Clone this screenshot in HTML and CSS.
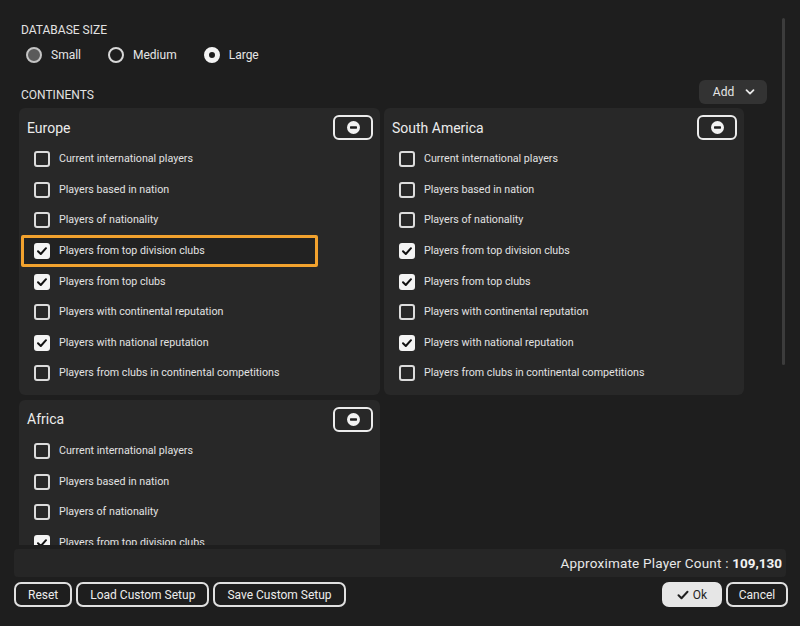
FILE: index.html
```html
<!DOCTYPE html>
<html lang="en">
<head>
    <meta charset="UTF-8">
    <title>Database Setup</title>
    <link rel="stylesheet" href="styles.css">
</head>
<body>
    <div class="dialog">
        <div class="scroll-area">
            <div class="section-label">DATABASE SIZE</div>
            <div class="radio-group">
                <label class="radio"><span class="radio-dot dim"></span>Small</label>
                <label class="radio"><span class="radio-dot"></span>Medium</label>
                <label class="radio"><span class="radio-dot selected"></span>Large</label>
            </div>

            <div class="continents">
                <div class="continents-header">
                    <div class="section-label">CONTINENTS</div>
                    <button class="add-button">Add
                        <svg width="10" height="10" viewBox="0 0 10 10"><path d="M1.5 3.2 5 6.6 8.5 3.2" fill="none" stroke="#e8e8e8" stroke-width="1.8" stroke-linecap="round" stroke-linejoin="round"/></svg>
                    </button>
                </div>
                <div class="card-grid" id="cardGrid">
                    <!-- cards rendered below -->
                </div>
            </div>

            <div class="scrollbar"></div>
        </div>

        <div class="count-bar">Approximate Player Count :&nbsp;<b>109,130</b></div>

        <div class="button-row">
            <button class="btn">Reset</button>
            <button class="btn">Load Custom Setup</button>
            <button class="btn">Save Custom Setup</button>
            <span class="spacer"></span>
            <button class="btn btn-ok">
                <svg width="12" height="12" viewBox="0 0 12 12"><path d="M1.5 6.3 4.5 9.2 10.5 2.8" fill="none" stroke="#1e1e1e" stroke-width="2" stroke-linecap="round" stroke-linejoin="round"/></svg>
                Ok
            </button>
            <button class="btn btn-cancel">Cancel</button>
        </div>
    </div>

    <script>
        const options = [
            "Current international players",
            "Players based in nation",
            "Players of nationality",
            "Players from top division clubs",
            "Players from top clubs",
            "Players with continental reputation",
            "Players with national reputation",
            "Players from clubs in continental competitions"
        ];

        // which options are ticked per continent (index list)
        const continents = [
            { name: "Europe", checked: [3, 4, 6], highlight: 3 },
            { name: "South America", checked: [3, 4, 6] },
            { name: "Africa", checked: [3] }
        ];

        const checkSvg = '<svg width="12" height="12" viewBox="0 0 12 12"><path d="M2 6.2 4.8 9 10 3.2" fill="none" stroke="#111" stroke-width="2" stroke-linecap="round" stroke-linejoin="round"/></svg>';
        const minusSvg = '<svg width="13" height="13" viewBox="0 0 13 13"><circle cx="6.5" cy="6.5" r="6.5" fill="#f2f2f2"/><rect x="3" y="5.3" width="7" height="2.4" rx="0.6" fill="#1e1e1e"/></svg>';

        function renderCards() {
            const grid = document.getElementById('cardGrid');
            continents.forEach(c => {
                const card = document.createElement('div');
                card.className = 'card';
                let rows = '';
                options.forEach((opt, i) => {
                    const on = c.checked.includes(i);
                    const hl = c.highlight === i ? ' highlight' : '';
                    rows += `
                        <div class="option${hl}">
                            <span class="checkbox${on ? ' checked' : ''}">${on ? checkSvg : ''}</span>
                            <span class="option-text">${opt}</span>
                        </div>`;
                });
                card.innerHTML = `
                    <div class="card-header">
                        <span class="card-title">${c.name}</span>
                        <button class="remove-button">${minusSvg}</button>
                    </div>
                    ${rows}`;
                grid.appendChild(card);
            });
        }

        renderCards();
    </script>
</body>
</html>
```

FILE: styles.css
```css
body {
    margin: 0;
    width: 800px;
    height: 626px;
    overflow: hidden;
    background: #1e1e1e;
    color: #e6e6e6;
    font-family: Roboto, "Noto Sans", Arial, sans-serif;
}
button {
    font-family: inherit;
}
.dialog {
    padding: 0 14px;
}
.scroll-area {
    position: relative;
    height: 545px;
    overflow: hidden;
    box-sizing: border-box;
    padding: 22px 0 0 6px;
}
.section-label {
    font-size: 12px;
    line-height: 16px;
    padding-left: 1px;
    color: #e2e2e2;
}
.radio-group {
    display: flex;
    margin-top: 8px;
    padding-left: 6px;
    gap: 27px;
}
.radio {
    display: flex;
    align-items: center;
    gap: 9px;
    font-size: 12px;
    line-height: 18px;
}
.radio-dot {
    width: 12px;
    height: 12px;
    border: 2px solid #d8d8d8;
    border-radius: 50%;
    box-sizing: content-box;
}
.radio-dot.dim {
    background: #5a5a5a;
    border-color: #c4c4c4;
}
.radio-dot.selected {
    background: #1e1e1e;
    border: 5px solid #f4f4f4;
    width: 6px;
    height: 6px;
}
.continents {
    width: 747px;
    margin-top: 16px;
}
.continents-header {
    display: flex;
    justify-content: space-between;
    align-items: flex-end;
    height: 24px;
}
.continents-header .section-label {
    margin-bottom: 1px;
}
.add-button {
    display: flex;
    align-items: center;
    justify-content: center;
    gap: 11px;
    width: 68px;
    height: 24px;
    border: none;
    border-radius: 6px;
    background: #333333;
    color: #e6e6e6;
    font-size: 12px;
    padding: 0 0 0 2px;
}
.card-grid {
    display: grid;
    grid-template-columns: 361px 360px;
    column-gap: 4px;
    row-gap: 5px;
    margin-top: 4px;
    margin-left: -1px;
}
.card {
    background: #282828;
    border-radius: 6px;
    padding: 7px 0 6px;
}
.card-header {
    display: flex;
    align-items: center;
    justify-content: space-between;
    height: 25px;
    padding: 0 7px 0 8px;
    margin-bottom: 4px;
}
.card-title {
    font-size: 14px;
    color: #ececec;
}
.remove-button {
    width: 40px;
    height: 25px;
    border: 2px solid #ececec;
    border-radius: 6px;
    background: transparent;
    display: flex;
    align-items: center;
    justify-content: center;
    padding: 0;
}
.option {
    position: relative;
    display: flex;
    align-items: center;
    height: 30.6px;
    padding-left: 14px;
    font-size: 10.7px;
    line-height: 14px;
    color: #e2e2e2;
}
.option.highlight::after {
    content: "";
    position: absolute;
    left: 2px;
    top: -1px;
    width: 297px;
    height: 32px;
    box-sizing: border-box;
    border: 3px solid #f2a22e;
    border-radius: 2px;
}
.option.highlight {
    background: linear-gradient(#222222, #222222) no-repeat 5px 2px / 291px 26px;
}
.checkbox {
    position: relative;
    width: 12px;
    height: 12px;
    border: 2px solid #dcdcdc;
    border-radius: 3px;
    margin-right: 9px;
    margin-left: 1px;
    display: flex;
    align-items: center;
    justify-content: center;
    flex-shrink: 0;
}
.checkbox.checked {
    background: #f4f4f4;
    border-color: #f4f4f4;
}
.option-text {
    position: relative;
    z-index: 1;
}
.scrollbar {
    position: absolute;
    right: 1px;
    top: 18px;
    width: 3px;
    height: 347px;
    border-radius: 2px;
    background: #3c3c3c;
}
.count-bar {
    display: flex;
    align-items: center;
    justify-content: flex-end;
    height: 28px;
    margin-top: 4px;
    padding-right: 4px;
    background: #262626;
    border-radius: 4px;
    font-size: 13.5px;
    line-height: 18px;
    letter-spacing: 0.2px;
    color: #e8e8e8;
}
.count-bar b {
    font-weight: bold;
    color: #f2f2f2;
    letter-spacing: 0;
}
.button-row {
    display: flex;
    gap: 4px;
    margin-top: 5px;
    margin-right: -2px;
}
.spacer {
    flex-grow: 1;
}
.btn {
    height: 25px;
    padding: 0 12px;
    border: 2px solid #e0e0e0;
    border-radius: 7px;
    background: #1e1e1e;
    color: #ececec;
    font-size: 12px;
    line-height: 16px;
    display: flex;
    align-items: center;
    gap: 4px;
    white-space: nowrap;
}
.btn-ok {
    width: 60px;
    justify-content: center;
    background: #e6e6e6;
    border-color: #e6e6e6;
    color: #1e1e1e;
}
.btn-cancel {
    width: 62px;
    justify-content: center;
}
```
